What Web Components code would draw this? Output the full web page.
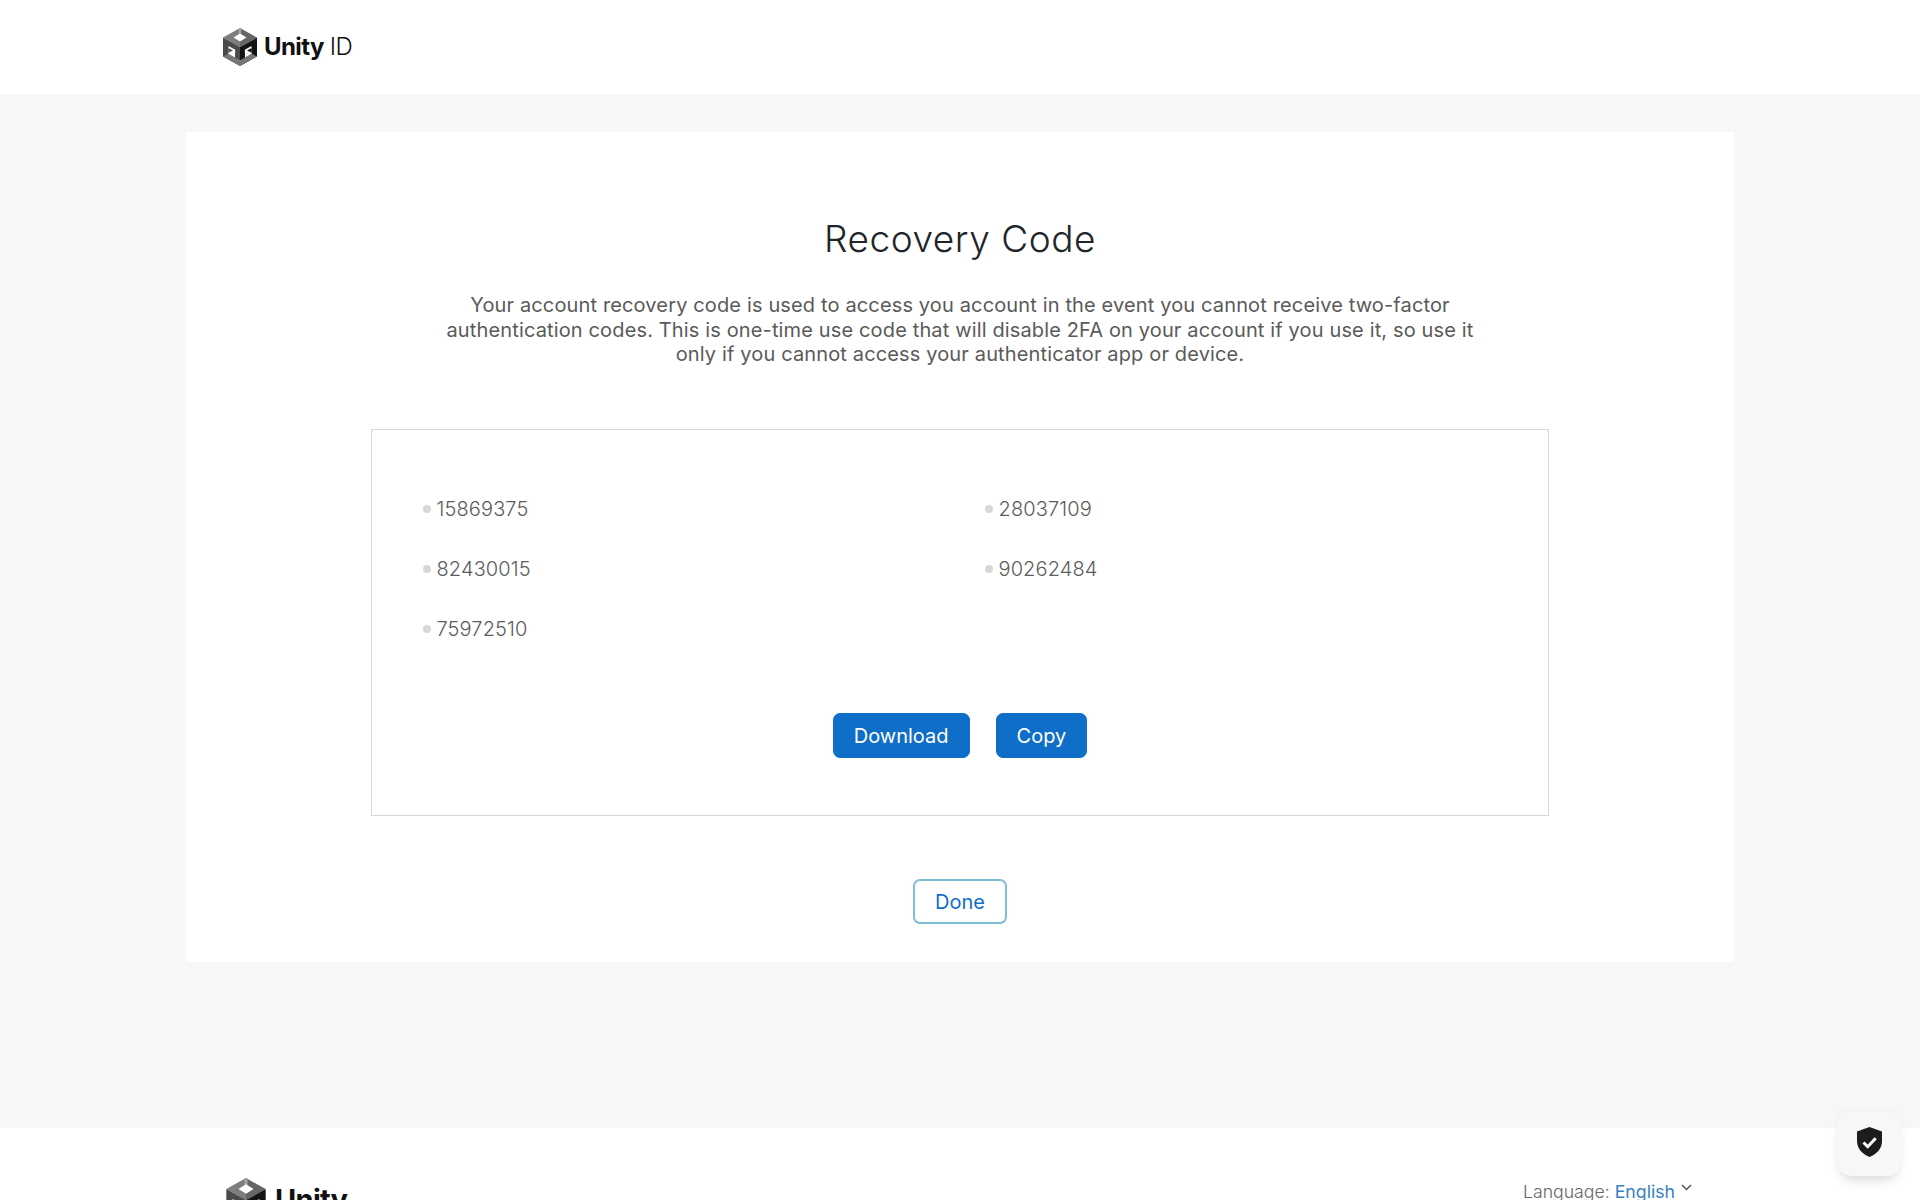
<!DOCTYPE html>
<html lang="en">
<head>
<meta charset="utf-8">
<title>Recovery Code</title>
<style>
  html, body { margin: 0; height: 1200px; overflow: hidden; }
  body {
    background: #f6f7f9;
    font-family: Inter, "Liberation Sans", sans-serif;
    color: #4a4a4a;
    display: flex;
    flex-direction: column;
  }
</style>
</head>
<body>
<unity-header></unity-header>
<main-card>
  <recovery-box>
    <li>15869375</li>
    <li>28037109</li>
    <li>82430015</li>
    <li>90262484</li>
    <li>75972510</li>
  </recovery-box>
</main-card>
<unity-footer></unity-footer>
<shield-badge></shield-badge>

<script>
const LOGO = `
  <svg viewBox="0 0 34 38" aria-hidden="true">
    <path fill="#7d7d7d" d="M17 0 0 9.600 17 19z"/>
    <path fill="#666" d="M17 0 34 9.600 17 19z"/>
    <path fill="#4a4a4a" d="M0 9.600V28.400L17 38V19z"/>
    <path fill="#141414" d="M34 9.600V28.400L17 38V19z"/>
    <path fill="#777" d="M0 28.400 17 38 34 28.400 28.700 25.750 22 29.400 17 32.200 12 29.400 5.300 25.750z"/>
    <path fill="#a8a8a8" d="M15.800 0.800h2.400V6h-2.400z"/>
    <path fill="#fff" d="M17 5.500 23.500 9.500 17 13.500 10.500 9.500z"/>
    <path fill="#fff" d="M5.300 25.750 12 29.400 12.200 21.750 5.500 18.100z"/>
    <path fill="#fff" d="M28.700 25.750 22 29.400 21.800 21.750 28.500 18.100z"/>
    <path fill="#4a4a4a" d="M5.300 24.800 10 22.600 5.400 20z"/>
    <path fill="#141414" d="M28.700 24.800 24 22.600 28.600 20z"/>
  </svg>`;

class UnityHeader extends HTMLElement {
  constructor() {
    super();
    this.attachShadow({ mode: "open" });
  }
  connectedCallback() {
    this.shadowRoot.innerHTML = `
      <style>
        :host { display: flex; align-items: center; height: 94px; background: #fff; padding-left: 223px; flex: none; }
        svg { width: 34px; height: 38px; margin-right: 7px; }
        .name { font-size: 24px; font-weight: 700; color: #111; letter-spacing: -0.6px; margin-top: -1px; }
        .id { font-size: 24px; font-weight: 300; color: #111; margin: -1px 0 0 6px; letter-spacing: -0.6px; }
      </style>
      ${LOGO}
      <span class="name">Unity</span><span class="id">ID</span>
    `;
  }
}

class MainCard extends HTMLElement {
  constructor() {
    super();
    this.attachShadow({ mode: "open" });
  }
  connectedCallback() {
    this.shadowRoot.innerHTML = `
      <style>
        :host {
          display: flex;
          flex-direction: column;
          align-items: center;
          flex: none;
          box-sizing: border-box;
          width: 1548px;
          height: 830px;
          margin: 38px 0 166px 186px;
          padding-top: 84px;
          background: #fff;
        }
        h1 { margin: 0; font-size: 37px; font-weight: 300; line-height: 46px; color: #212529; letter-spacing: 0.55px; }
        p { margin: 31px 0 0; width: 1040px; font-size: 20px; line-height: 24.5px; text-align: center; color: #5a5a5a; letter-spacing: 0.14px; }
        app-button { margin-top: 63px; }
      </style>
      <h1>Recovery Code</h1>
      <p>Your account recovery code is used to access you account in the event you cannot receive two-factor authentication codes. This is one-time use code that will disable 2FA on your account if you use it, so use it only if you cannot access your authenticator app or device.</p>
      <slot></slot>
      <app-button variant="outline">Done</app-button>
    `;
  }
}

class RecoveryBox extends HTMLElement {
  constructor() {
    super();
    this.attachShadow({ mode: "open" });
  }
  connectedCallback() {
    this.shadowRoot.innerHTML = `
      <style>
        :host {
          display: block;
          box-sizing: border-box;
          width: 1178px;
          height: 387px;
          margin-top: 62px;
          padding: 49px 51px 0;
          border: 1px solid #d6d6d6;
        }
        ul { display: grid; grid-template-columns: 562px 1fr; grid-auto-rows: 60.4px; margin: 0; padding: 0; list-style: none; }
        ::slotted(li) {
          display: flex;
          align-items: center;
          gap: 5.500px;
          font-size: 20px;
          line-height: 28px;
          color: #5c5c5c;
          font-weight: 300;
          letter-spacing: 0.12px;
        }
        .actions { display: flex; justify-content: center; gap: 26px; margin-top: 53px; }
      </style>
      <ul><slot></slot></ul>
      <div class="actions">
        <app-button>Download</app-button>
        <app-button>Copy</app-button>
      </div>
    `;
    // bullets are drawn per item since ::before on slotted content is not reachable here
    this.querySelectorAll("li").forEach((li) => {
      const dot = document.createElement("code-dot");
      li.prepend(dot);
    });
  }
}

class CodeDot extends HTMLElement {
  constructor() {
    super();
    this.attachShadow({ mode: "open" });
    this.shadowRoot.innerHTML = `
      <style>
        :host { display: block; width: 8px; height: 8px; border-radius: 50%; background: #d8d8d8; flex: none; }
      </style>
    `;
  }
}

class AppButton extends HTMLElement {
  constructor() {
    super();
    this.attachShadow({ mode: "open" });
  }
  connectedCallback() {
    this.shadowRoot.innerHTML = `
      <style>
        :host { display: inline-block; }
        button {
          box-sizing: border-box;
          height: 45px;
          padding: 2px 20px 0;
          border: 1px solid #0f6ec7;
          border-radius: 7px;
          background: #0f6ec7;
          color: #fff;
          font: 400 20px Inter, "Liberation Sans", sans-serif;
          cursor: pointer;
        }
        :host([variant="outline"]) button {
          border: 2px solid #7fbfd6;
          background: #fff;
          color: #0f6ec7;
        }
      </style>
      <button type="button"><slot></slot></button>
    `;
  }
}

class UnityFooter extends HTMLElement {
  constructor() {
    super();
    this.attachShadow({ mode: "open" });
  }
  connectedCallback() {
    this.shadowRoot.innerHTML = `
      <style>
        :host {
          display: flex;
          justify-content: space-between;
          flex: none;
          box-sizing: border-box;
          height: 72px;
          padding: 50px 228px 0 226px;
          background: #fff;
          overflow: hidden;
        }
        .logo { display: flex; align-items: flex-start; }
        .logo svg { width: 40px; height: 44px; margin-right: 9px; }
        .name { font-size: 29px; font-weight: 700; line-height: 44px; color: #111; letter-spacing: -0.7px; }
        .lang { font-size: 17.7px; line-height: 24px; color: #666; font-weight: 300; margin-top: 2px; }
        .lang a { color: #3a7fc1; font-weight: 400; text-decoration: none; }
        .lang svg { width: 11px; height: 7px; margin: 0 0 7px 1px; }
      </style>
      <div class="logo">${LOGO}<span class="name">Unity</span></div>
      <div class="lang">Language: <a href="#">English</a>
        <svg viewBox="0 0 11 7"><path d="M1 1l4.500 4.500L10 1" fill="none" stroke="#555" stroke-width="1.500"/></svg>
      </div>
    `;
  }
}

class ShieldBadge extends HTMLElement {
  constructor() {
    super();
    this.attachShadow({ mode: "open" });
    this.shadowRoot.innerHTML = `
      <style>
        :host {
          position: fixed;
          left: 1837px;
          top: 1112px;
          width: 64px;
          height: 64px;
          display: flex;
          align-items: center;
          justify-content: center;
          border-radius: 14px;
          background: #f7f7f7;
          box-shadow: 0 8px 12px -4px rgba(0, 0, 0, 0.14), 0 0 10px rgba(0, 0, 0, 0.04);
        }
        svg { width: 25px; height: 30px; margin-top: -4px; }
      </style>
      <svg viewBox="0 0 25 30">
        <path fill="#1c1c1e" d="M12.500 0 25 4.500V14c0 7.500-5 13-12.500 16C5 27 0 21.500 0 14V4.500z"/>
        <path fill="none" stroke="#fff" stroke-width="3" d="M6.500 15.500l4.200 4.200 8-8.500"/>
      </svg>
    `;
  }
}

customElements.define("code-dot", CodeDot);
customElements.define("app-button", AppButton);
customElements.define("unity-header", UnityHeader);
customElements.define("main-card", MainCard);
customElements.define("recovery-box", RecoveryBox);
customElements.define("unity-footer", UnityFooter);
customElements.define("shield-badge", ShieldBadge);
</script>
</body>
</html>
